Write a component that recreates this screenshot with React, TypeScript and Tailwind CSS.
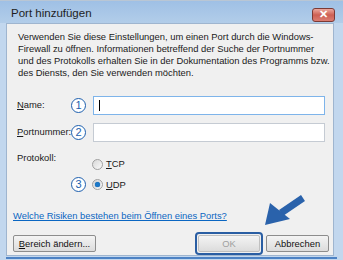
import React from 'react';

const font = { fontFamily: '"Liberation Sans", Arial, sans-serif' };

function Badge({ n }: { n: string }) {
  return (
    <span className="flex h-[15px] w-[15px] items-center justify-center rounded-full border border-[#1d5fae] bg-white text-[11px] leading-none text-[#1d5fae]">
      {n}
    </span>
  );
}

function Radio({ checked }: { checked?: boolean }) {
  return (
    <span className="flex h-[11px] w-[11px] items-center justify-center rounded-full border border-[#a0a0a0] bg-gradient-to-br from-[#d8d8d8] to-[#fafafa]">
      {checked && <span className="h-[5px] w-[5px] rounded-full bg-[#1b78c8] shadow-[0_0_1px_#0d4f8f]" />}
    </span>
  );
}

function Button({ children, className = '' }: { children: React.ReactNode; className?: string }) {
  return (
    <div
      className={`flex h-[17px] items-center justify-center rounded-[2px] border bg-gradient-to-b from-[#f4f4f4] to-[#dcdcdc] text-[9.4px] ${className}`}
    >
      {children}
    </div>
  );
}

export default function App() {
  return (
    <div className="relative h-[260px] w-[343px] overflow-hidden bg-[#c2d7ee]" style={font}>
      {/* title bar */}
      <div className="flex h-[23px] items-center justify-between border-t border-[#b9c6d4] bg-gradient-to-b from-[#9fc0e5] to-[#b2cde9] pl-[11px] pr-[8px]">
        <span className="pt-[4px] text-[11.5px] text-[#1e1e1e]">Port hinzufügen</span>
        <div className="mt-[5px] flex h-[14px] w-[23px] items-center justify-center rounded-[3px] border border-[#7c3a35] bg-gradient-to-b from-[#eba89f] via-[#cd5f53] to-[#dc7d72] text-[11px] font-bold leading-none text-white">
          ✕
        </div>
      </div>

      {/* client area */}
      <div className="mx-[6px] flex h-[233px] w-[328px] flex-col border border-[#9fb5cf] bg-[#f0f0f0] pl-[10px] text-[9.4px] text-[#1a1a1a]">
        <div className="mt-[7px] whitespace-nowrap pl-[1px] leading-[12px]">
          <div>Verwenden Sie diese Einstellungen, um einen Port durch die Windows-</div>
          <div>Firewall zu öffnen. Informationen betreffend der Suche der Portnummer</div>
          <div>und des Protokolls erhalten Sie in der Dokumentation des Programms bzw.</div>
          <div>des Diensts, den Sie verwenden möchten.</div>
        </div>

        <div className="mt-[17px] flex items-center">
          <span className="w-[54px]">
            <u>N</u>ame:
          </span>
          <Badge n="1" />
          <div className="ml-[7px] flex h-[19px] w-[232px] items-center border border-[#7eb4ea] bg-white pl-[5px]">
            <span className="h-[11px] w-px bg-black" />
          </div>
        </div>

        <div className="mt-[8px] flex items-center">
          <span className="w-[54px] whitespace-nowrap">
            <u>P</u>ortnummer:
          </span>
          <Badge n="2" />
          <div className="ml-[7px] h-[19px] w-[232px] border border-[#c5cbd3] bg-white" />
        </div>

        <div className="mt-[10px] flex items-start">
          <span className="w-[75px] leading-[12px]">Protokoll:</span>
          <div className="mt-[5px] flex items-center gap-[3px]">
            <Radio />
            <span>
              <u>T</u>CP
            </span>
          </div>
        </div>

        <div className="mt-[6px] flex items-center">
          <span className="w-[54px]" />
          <Badge n="3" />
          <div className="ml-[6px] flex items-center gap-[3px]">
            <Radio checked />
            <span>
              <u>U</u>DP
            </span>
          </div>
        </div>

        <div className="-ml-[4px] mt-[18px] text-[#0a66c2] underline leading-[12px]">
          Welche Risiken bestehen beim Öffnen eines Ports?
        </div>

        <div className="-ml-[4px] mt-[10px] flex items-center pr-[4px]">
          <Button className="w-[83px] border-[#8d8d8d] text-[#111]">
            <span>
              <u>B</u>ereich ändern...
            </span>
          </Button>
          <div className="ml-auto rounded-[4px] border-2 border-[#2a5ea3] p-[1px]">
            <Button className="w-[62px] border-[#c0c0c0] text-[#a0a0a0]">OK</Button>
          </div>
          <Button className="ml-[3px] w-[63px] border-[#8d8d8d] text-[#111]">Abbrechen</Button>
        </div>
      </div>
      <div className="mx-[6px] mt-[1px] h-[2px] bg-[#4d82c4]" />

      {/* pointer arrow */}
      <svg className="absolute left-0 top-0" width="343" height="260" viewBox="0 0 343 260">
        <line x1="303" y1="198" x2="281" y2="213" stroke="#2a62ab" strokeWidth="7" />
        <polygon points="265,225 270,203 290,219" fill="#2a62ab" />
      </svg>
    </div>
  );
}
